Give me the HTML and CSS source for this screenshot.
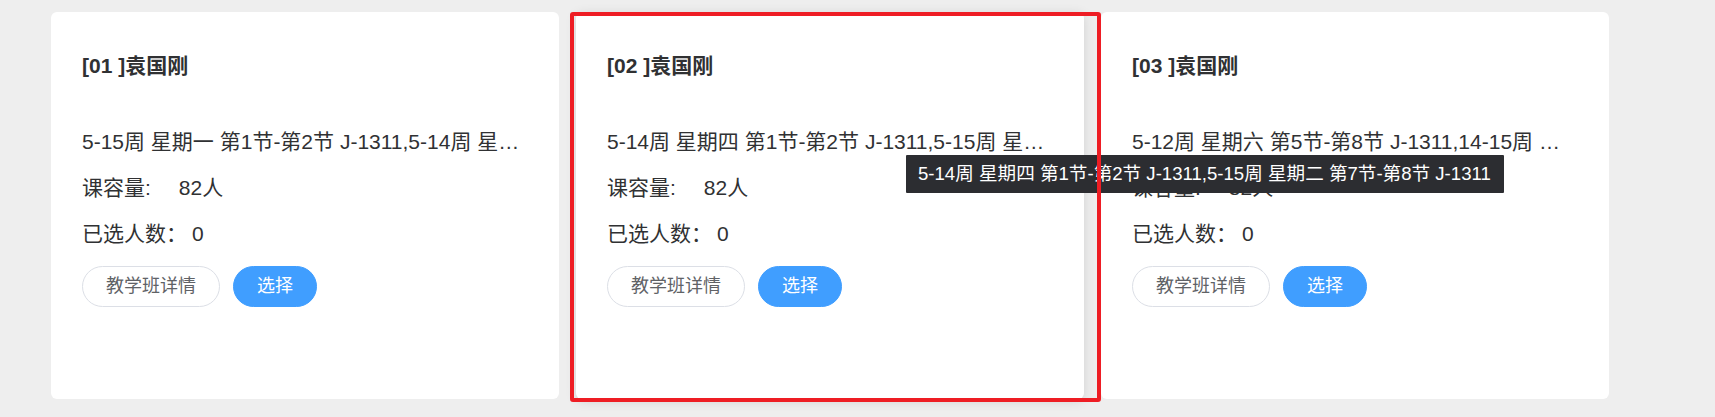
FILE: index.html
```html
<!DOCTYPE html>
<html lang="zh-CN">
<head>
<meta charset="utf-8">
<title>教学班</title>
<link rel="stylesheet" href="styles.css">
</head>
<body>
<div class="page">
  <div class="cards">
    <div class="card">
      <div class="card-title">[01 ]袁国刚</div>
      <div class="info info-time">5-15周 星期一 第1节-第2节 J-1311,5-14周 星期三 第3节-第4节 J-1311</div>
      <div class="info"><span>课容量:</span><span class="val val-cap">82人</span></div>
      <div class="info"><span>已选人数：</span><span class="val val-sel">0</span></div>
      <div class="actions">
        <button class="btn btn-plain">教学班详情</button>
        <button class="btn btn-primary">选择</button>
      </div>
    </div>
    <div class="card card-hover">
      <div class="card-title">[02 ]袁国刚</div>
      <div class="info info-time">5-14周 星期四 第1节-第2节 J-1311,5-15周 星期二 第7节-第8节 J-1311</div>
      <div class="info"><span>课容量:</span><span class="val val-cap">82人</span></div>
      <div class="info"><span>已选人数：</span><span class="val val-sel">0</span></div>
      <div class="actions">
        <button class="btn btn-plain">教学班详情</button>
        <button class="btn btn-primary">选择</button>
      </div>
    </div>
    <div class="card">
      <div class="card-title">[03 ]袁国刚</div>
      <div class="info info-time">5-12周 星期六 第5节-第8节 J-1311,14-15周 星期六 第5节-第8节 J-1311</div>
      <div class="info"><span>课容量:</span><span class="val val-cap">82人</span></div>
      <div class="info"><span>已选人数：</span><span class="val val-sel">0</span></div>
      <div class="actions">
        <button class="btn btn-plain">教学班详情</button>
        <button class="btn btn-primary">选择</button>
      </div>
    </div>
  </div>
  <div class="tooltip">5-14周 星期四 第1节-第2节 J-1311,5-15周 星期二 第7节-第8节 J-1311</div>
  <div class="highlight"></div>
</div>
</body>
</html>
```
FILE: styles.css
```css
html, body {
  margin: 0;
  padding: 0;
  background: #eeeeee;
}

body {
  font-family: "Liberation Sans", "Noto Sans CJK SC", sans-serif;
  color: #303133;
}

.page {
  position: relative;
  width: 1715px;
  height: 417px;
  overflow: hidden;
}

.cards {
  display: flex;
  gap: 17px;
  padding: 12px 0 0 51px;
}

.card {
  box-sizing: border-box;
  width: 508px;
  height: 387px;
  padding: 31px 31px;
  background: #ffffff;
  border-radius: 6px;
  display: flex;
  flex-direction: column;
}

.card-hover {
  box-shadow: 0 2px 12px 0 rgba(0, 0, 0, 0.12);
}

.card-title {
  font-size: 21px;
  font-weight: bold;
  line-height: 46px;
  margin-bottom: 30px;
  color: #303133;
}

.info {
  font-size: 21px;
  line-height: 46px;
  white-space: nowrap;
  overflow: hidden;
  text-overflow: ellipsis;
}

.val-cap {
  margin-left: 28px;
}

.val-sel {
  margin-left: 5px;
}

.actions {
  display: flex;
  gap: 13px;
  margin-top: 9px;
}

.btn {
  box-sizing: border-box;
  height: 41px;
  padding: 0 23px;
  border-radius: 21px;
  font-family: "Liberation Sans", "Noto Sans CJK SC", sans-serif;
  font-size: 18px;
  line-height: 39px;
  cursor: pointer;
}

.btn-plain {
  background: #ffffff;
  border: 1px solid #dcdfe6;
  color: #606266;
}

.btn-primary {
  background: #409eff;
  border: 1px solid #409eff;
  color: #ffffff;
}

.tooltip {
  position: absolute;
  left: 906px;
  top: 155px;
  height: 38px;
  padding: 0 13px 0 12px;
  background: #2c2d31;
  color: #ffffff;
  font-size: 18.6px;
  line-height: 38px;
  white-space: nowrap;
  border-radius: 1px;
}

.highlight {
  position: absolute;
  left: 570px;
  top: 12px;
  width: 531px;
  height: 390px;
  box-sizing: border-box;
  border: 4px solid #ee1d24;
  border-radius: 3px;
  pointer-events: none;
}
```
